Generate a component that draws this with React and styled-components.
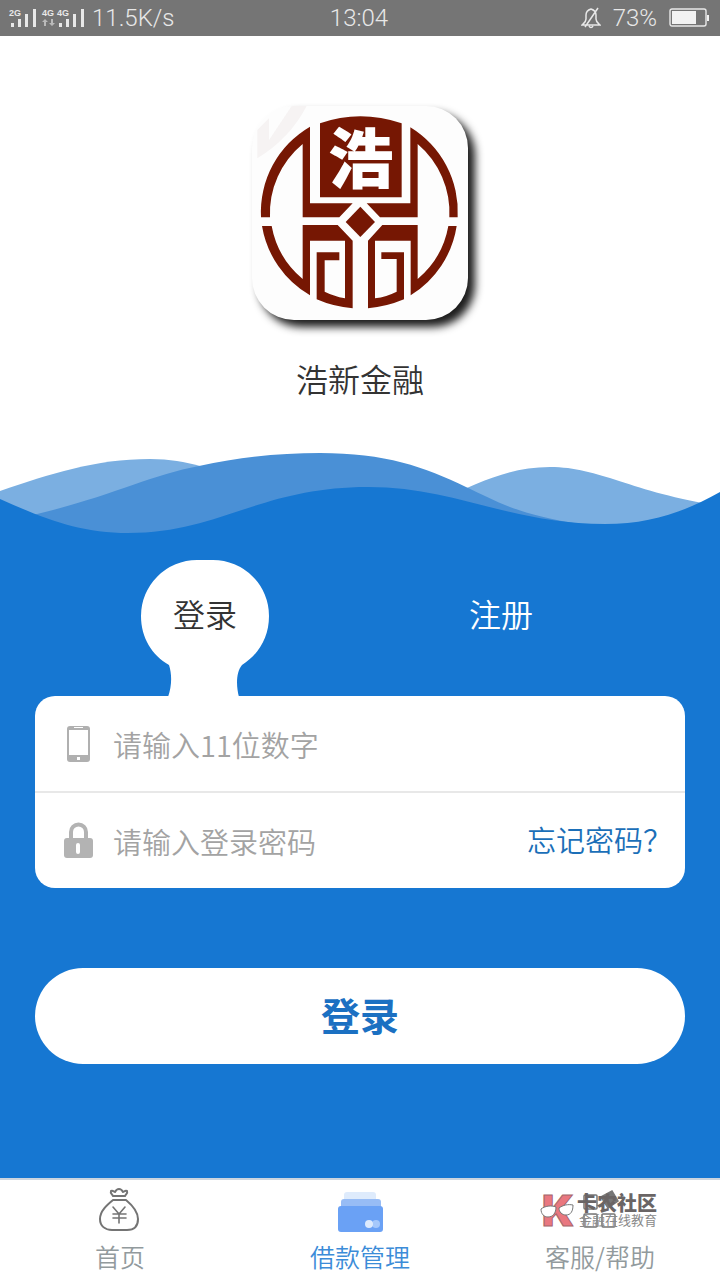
import React, { useState } from 'react';
import styled, { createGlobalStyle } from 'styled-components';

const GlobalStyle = createGlobalStyle`
    * {
        box-sizing: border-box;
    }

    body {
        margin: 0;
        background-color: #ffffff;
        font-family: "Noto Sans CJK SC", sans-serif;
        font-weight: 350;
    }

    button, input {
        font-family: inherit;
        font-weight: inherit;
    }
`;

const Page = styled.div`
    display: flex;
    flex-direction: column;
    min-height: 100vh;
`;

const StatusBar = styled.header`
    display: grid;
    grid-template-columns: 1fr auto 1fr;
    align-items: center;
    height: 36px;
    padding: 0 10px 0 8px;
    background-color: #757575;
    color: #e8e8e8;
    font-family: Roboto, sans-serif;
    font-size: 24px;
    font-weight: 300;
    line-height: 36px;
`;

const StatusGroup = styled.div`
    display: flex;
    align-items: center;
    justify-content: ${props => props.$end ? 'flex-end' : 'flex-start'};
    gap: ${props => props.$end ? '12px' : '7px'};
`;

const Brand = styled.section`
    display: flex;
    flex-direction: column;
    align-items: center;
    gap: 40px;
    padding: 70px 0 44px;
`;

const LogoCard = styled.div`
    width: 216px;
    height: 214px;
    border-radius: 42px;
    background-color: #fdfdfd;
    box-shadow: 7px 7px 8px #1c1c1c;
    overflow: hidden;

    svg {
        display: block;
    }
`;

const BrandName = styled.h1`
    margin: 0;
    color: #333333;
    font-size: 32px;
    font-weight: 350;
    line-height: 36px;
`;

const Waves = styled.svg`
    display: block;
    width: 100%;
    height: 110px;
`;

const Main = styled.main`
    flex: 1;
    padding: 10px 35px 40px;
    background-color: #1677d2;
`;

const Tabs = styled.div`
    display: flex;
    justify-content: space-around;
    height: 136px;
    padding: 0 36px 0 22px;
`;

const Tab = styled.button`
    position: relative;
    width: 128px;
    height: 112px;
    padding: 0 0 6px;
    border: none;
    background: none;
    color: ${props => props.$active ? '#333333' : '#ffffff'};
    font-size: 32px;
    line-height: 40px;
    cursor: pointer;
`;

const TabShape = styled.svg`
    position: absolute;
    top: 0;
    left: 0;
`;

const TabText = styled.span`
    position: relative;
`;

const Fields = styled.div`
    border-radius: 20px;
    background-color: #ffffff;
`;

const Field = styled.div`
    display: flex;
    align-items: center;
    height: 95px;
    padding: 0 13px 0 29px;

    & + & {
        height: 97px;
        border-top: 2px solid #e8e8e8;
    }
`;

const FieldLabel = styled.label`
    display: flex;
    width: 49px;
`;

const FieldInput = styled.input`
    flex: 1;
    min-width: 0;
    height: 60px;
    padding: 0;
    border: none;
    outline: none;
    background: none;
    color: #333333;
    font-size: 29px;

    &::placeholder {
        color: #a3a3a3;
        opacity: 1;
    }
`;

const ForgotLink = styled.a`
    padding-bottom: 4px;
    color: #1b6fb8;
    font-size: 29px;
    text-decoration: none;
`;

const SubmitButton = styled.button`
    display: block;
    width: 100%;
    height: 96px;
    margin-top: 80px;
    padding: 0 0 4px;
    border: none;
    border-radius: 48px;
    background-color: #ffffff;
    color: #1b70c2;
    font-size: 39px;
    font-weight: 700;
    cursor: pointer;
`;

const NavBar = styled.nav`
    display: grid;
    grid-template-columns: repeat(3, 1fr);
    height: 102px;
    border-top: 2px solid #ccd5df;
    background-color: #ffffff;
`;

const NavItem = styled.a`
    position: relative;
    display: flex;
    flex-direction: column;
    align-items: center;
    gap: 4px;
    padding-top: 6px;
    color: ${props => props.$active ? '#3c8cd8' : '#929a9d'};
    font-size: 25px;
    line-height: 40px;
    text-decoration: none;
`;

const Watermark = styled.svg`
    position: absolute;
    top: 0;
    left: 50%;
    margin-left: -60px;
`;

const SignalIcon = () => (
    <svg width="77" height="36" viewBox="0 0 77 36" fill="#e8e8e8" fontFamily="Liberation Sans, sans-serif" fontSize="9" fontWeight="700">
        <text x="1" y="16">2G</text>
        <text x="34" y="16">4G</text>
        <text x="49" y="16">4G</text>
        <path d="M3 23h3v4H3zM10 19h3v8h-3zM17 14h3v13h-3zM25 9h3v18h-3z" />
        <path d="M51 23h3v4h-3zM58 19h3v8h-3zM65 14h3v13h-3zM73 9h3v18h-3z" />
        <path d="M37 19l3 3h-2v4h-2v-4h-2zM44 26l-3-3h2v-4h2v4h2z" opacity="0.6" />
    </svg>
);

const BellOffIcon = () => (
    <svg width="20" height="24" viewBox="0 0 20 24" fill="none" stroke="#e8e8e8" strokeWidth="1.5">
        <path d="M1 19h18c-2-2-4-3-4-6V9c0-3-2-5-5-6-3 1-5 3-5 6v4c0 3-2 4-4 6zM8 20c1 2 3 2 4 0M17 2L4 21" />
    </svg>
);

const BatteryIcon = () => (
    <svg width="41" height="20" viewBox="0 0 41 20">
        <rect x="1" y="1" width="36" height="17" rx="2" fill="none" stroke="#e8e8e8" strokeWidth="1.4" />
        <path d="M3 3h24v13H3zM38 7h2v6h-2z" fill="#f2f2f2" />
    </svg>
);

const Logo = () => (
    <svg width="216" height="214" viewBox="36 48 648 642" preserveAspectRatio="none">
        <path d="M52 205V120l35-35v65L155 48h45Q150 145 52 205z" fill="#f6f3f3" />
        <g fill="#761703">
            <path d="M240 100Q360 58 485 100V322H240z" />
            <path d="M63 382A297 297 0 0 1 210 110V340H338L298 382H188V162A270 270 0 0 0 90 382z" />
            <path d="M653 382A297 297 0 0 0 511 112V340H380L420 382H533V162A270 270 0 0 1 628 382z" />
            <path d="M66 408H95A270 270 0 0 0 188 567V405H293L338 452V655Q280 650 230 628V487H298V511H254V605Q280 618 315 625V452H210V616A297 297 0 0 1 66 408z" />
            <path d="M650 408H625A270 270 0 0 1 533 567V405H427L384 452V655Q440 650 492 628V487H424V507H470V605Q440 620 405 625V452H512V616A297 297 0 0 0 650 408z" />
            <path d="M361 350l44 46-44 45-44-45z" />
        </g>
        <text x="362" y="279" textAnchor="middle" fill="#ffffff" fontSize="198" fontWeight="900">浩</text>
    </svg>
);

const PhoneIcon = () => (
    <svg width="30" height="38" viewBox="0 0 30 38">
        <rect x="3" y="1" width="23" height="36" rx="3" fill="#b0b0b0" />
        <path d="M5 5h19v25H5zM10 2h9v1h-9zM13 32h3v3h-3z" fill="#ffffff" />
    </svg>
);

const LockIcon = () => (
    <svg width="30" height="38" viewBox="0 0 30 38">
        <path d="M7 18v-8a7 7 0 0 1 15 0v8" fill="none" stroke="#b3b3b3" strokeWidth="4" />
        <rect x="0" y="16" width="29" height="20" rx="3" fill="#b3b3b3" />
        <rect x="12" y="21" width="4" height="11" rx="2" fill="#ffffff" />
    </svg>
);

const MoneyBagIcon = () => (
    <svg width="46" height="46" viewBox="0 0 46 46" fill="none" stroke="#747474" strokeWidth="2" strokeLinejoin="round" strokeLinecap="round">
        <path d="M16 10c-1-2-3-3-2-5 2-1 3 1 4 1 1-2 3-3 4-3s3 1 4 3c1 0 2-2 4-1 1 2-1 3-2 5z" />
        <path d="M16 14h13c6 5 12 11 12 19 0 7-4 11-11 11H15C8 44 3 40 3 33c0-8 7-14 13-19z" />
        <path d="M16 21l6 7 6-7M16 28h13M16 32h13M22 28v9" strokeWidth="1.6" />
    </svg>
);

const WalletIcon = () => (
    <svg width="46" height="46" viewBox="0 0 46 46">
        <rect x="7" y="6" width="32" height="20" rx="3" fill="#deebfc" />
        <rect x="4" y="13" width="40" height="20" rx="3" fill="#97bcf5" />
        <rect x="1" y="20" width="45" height="26" rx="3" fill="#6aa1f5" />
        <circle cx="39" cy="38" r="4" fill="#a5c8fb" />
        <circle cx="32" cy="38" r="4" fill="#dceafd" />
    </svg>
);

const GridIcon = () => (
    <svg width="46" height="46" viewBox="0 0 46 46" fill="none" stroke="#777777" strokeWidth="1.5">
        <rect x="7" y="9" width="13" height="14" rx="1" />
        <rect x="7" y="28" width="13" height="13" rx="1" />
        <rect x="25" y="28" width="13" height="13" rx="1" />
        <path d="M24 11l11-6 6 10-10 7z" fill="#777777" />
    </svg>
);

const CommunityMark = () => (
    <Watermark width="124" height="60" viewBox="0 0 124 60">
        <text x="18" y="46" textAnchor="middle" fontFamily="Inter, sans-serif" fontSize="42" fontWeight="900" fill="#e9777f" stroke="#a5666a" strokeWidth="1">K</text>
        <g fill="#ffffff" stroke="#777777" strokeWidth="1">
            <path d="M1 29c4-3 10-4 15-2 0 6-3 10-8 10-4 0-7-3-7-8zM19 28c4-3 9-4 14-3 0 6-2 10-7 10-4 0-7-3-7-7z" />
        </g>
        <text x="37" y="31" fontSize="20" fontWeight="900" fill="#6a6565">卡农社区</text>
        <text x="39" y="45" fontSize="13" fontWeight="400" fill="#8a8a8a">金融在线教育</text>
    </Watermark>
);

const tabs = [
    { id: 'login', title: '登录' },
    { id: 'register', title: '注册' },
];

export default function App() {
    const [activeTab, setActiveTab] = useState('login');

    return (
        <Page>
            <GlobalStyle />
            <StatusBar>
                <StatusGroup>
                    <SignalIcon />
                    <span>11.5K/s</span>
                </StatusGroup>
                <span>13:04</span>
                <StatusGroup $end>
                    <BellOffIcon />
                    <span>73%</span>
                    <BatteryIcon />
                </StatusGroup>
            </StatusBar>

            <Brand>
                <LogoCard>
                    <Logo />
                </LogoCard>
                <BrandName>浩新金融</BrandName>
            </Brand>

            <Waves viewBox="0 0 720 110" preserveAspectRatio="none">
                <path d="M0 51C50 34 95 19 150 19C170 19 185 22 200 26L300 90H0z" fill="#7bafe1" />
                <path d="M440 60C480 42 510 27 550 27C600 27 630 52 720 66V100H440z" fill="#7bafe1" />
                <path d="M33 75C110 57 150 35 199 26C240 17 280 13 320 13C385 13 425 27 466 47C500 63 520 75 580 84V100H33z" fill="#4a90d6" />
                <path d="M0 59C45 79 80 93 128 93C220 93 260 47 368 47C455 47 510 84 605 84C650 84 685 72 720 52V110H0z" fill="#1677d2" />
            </Waves>

            <Main>
                <Tabs>
                    {tabs.map(tab => (
                        <Tab
                            key={tab.id}
                            type="button"
                            $active={tab.id === activeTab}
                            onClick={() => setActiveTab(tab.id)}
                        >
                            {tab.id === activeTab ? (
                                <TabShape width="128" height="137" viewBox="0 0 128 137" fill="#ffffff">
                                    <path d="M56 0H72A56 56 0 0 1 128 56C128 78 117 95 101 105C95 112 95 126 98 137H27C31 126 31 114 28 105C11 95 0 78 0 56A56 56 0 0 1 56 0z" />
                                </TabShape>
                            ) : ''}
                            <TabText>{tab.title}</TabText>
                        </Tab>
                    ))}
                </Tabs>

                <form onSubmit={e => e.preventDefault()}>
                    <Fields>
                        <Field>
                            <FieldLabel htmlFor="phone" aria-label="手机号">
                                <PhoneIcon />
                            </FieldLabel>
                            <FieldInput id="phone" type="tel" placeholder="请输入11位数字" />
                        </Field>
                        <Field>
                            <FieldLabel htmlFor="password" aria-label="密码">
                                <LockIcon />
                            </FieldLabel>
                            <FieldInput id="password" type="password" placeholder="请输入登录密码" />
                            <ForgotLink href="#forgot">忘记密码？</ForgotLink>
                        </Field>
                    </Fields>
                    <SubmitButton type="submit">登录</SubmitButton>
                </form>
            </Main>

            <NavBar>
                <NavItem href="#home">
                    <MoneyBagIcon />
                    <span>首页</span>
                </NavItem>
                <NavItem href="#loans" $active>
                    <WalletIcon />
                    <span>借款管理</span>
                </NavItem>
                <NavItem href="#help">
                    <GridIcon />
                    <span>客服/帮助</span>
                    <CommunityMark />
                </NavItem>
            </NavBar>
        </Page>
    );
}
